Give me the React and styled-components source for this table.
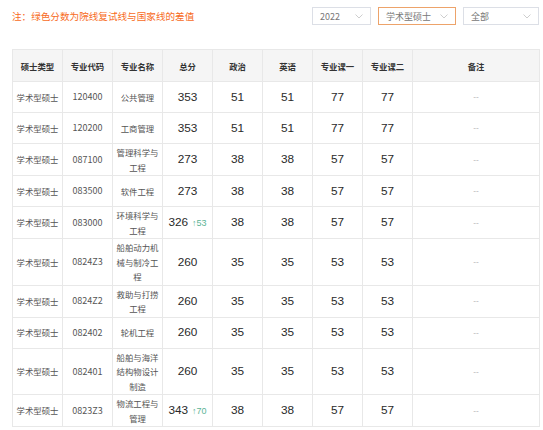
import React from "react";
import styled, { createGlobalStyle } from "styled-components";

const GlobalStyle = createGlobalStyle`
  body {
    margin: 0;
    background: #fff;
    font-family: "Noto Sans CJK SC", "Microsoft YaHei", sans-serif;
  }
`;

const Page = styled.div`
  width: 543px;
  padding: 0 4px 0 12px;
  box-sizing: border-box;
`;

const TopBar = styled.div`
  display: flex;
  align-items: center;
  justify-content: space-between;
  height: 32px;
`;

const Note = styled.div`
  color: #f76b1c;
  font-size: 9.6px;
  margin-top: -1px;
`;

const Filters = styled.div`
  display: flex;
  gap: 7px;
`;

const Select = styled.div`
  display: flex;
  align-items: center;
  justify-content: space-between;
  box-sizing: border-box;
  width: ${({ w }) => w}px;
  height: 18px;
  padding: 0 7px;
  border: 1px solid ${({ active }) => (active ? "#eda36a" : "#dcdfe6")};
  color: #777;
  font-size: 9px;
  background: #fff;
`;

const Chevron = () => (
  <svg width="8" height="5" viewBox="0 0 8 5">
    <path d="M0.5 0.5 L4 4 L7.5 0.5" fill="none" stroke="#c8c8c8" strokeWidth="0.9" />
  </svg>
);

const Table = styled.table`
  margin-top: 17px;
  border-collapse: collapse;
  table-layout: fixed;
  width: 527px;
`;

const Th = styled.th`
  background: #f5f5f5;
  border: 1px solid #e8e8e8;
  height: 31px;
  padding: 0;
  font-size: 8.4px;
  font-weight: bold;
  color: #333;
  text-align: center;
`;

const Td = styled.td`
  border: 1px solid #e8e8e8;
  height: 28px;
  padding: 1px 3px;
  text-align: center;
  font-size: 8.4px;
  line-height: 14.5px;
  color: #555;
`;

const Code = styled.span`
  font-size: 9px;
`;

const Score = styled.span`
  font-family: "Liberation Sans", Arial, sans-serif;
  font-size: 11.8px;
  font-weight: 400;
  line-height: 1;
  color: #2a2a2a;
`;

const Diff = styled.span`
  font-family: "Liberation Sans", Arial, sans-serif;
  font-size: 9px;
  line-height: 1;
  color: #5bb396;
  margin-left: 4px;
`;

const Dash = styled.span`
  font-size: 8px;
  color: #aaa;
`;

const rows = [
  ["120400", "公共管理", 353, null, 51, 51, 77, 77],
  ["120200", "工商管理", 353, null, 51, 51, 77, 77],
  ["087100", "管理科学与工程", 273, null, 38, 38, 57, 57],
  ["083500", "软件工程", 273, null, 38, 38, 57, 57],
  ["083000", "环境科学与工程", 326, 53, 38, 38, 57, 57],
  ["0824Z3", "船舶动力机械与制冷工程", 260, null, 35, 35, 53, 53],
  ["0824Z2", "救助与打捞工程", 260, null, 35, 35, 53, 53],
  ["082402", "轮机工程", 260, null, 35, 35, 53, 53],
  ["082401", "船舶与海洋结构物设计制造", 260, null, 35, 35, 53, 53],
  ["0823Z3", "物流工程与管理", 343, 70, 38, 38, 57, 57],
];

const heads = ["硕士类型", "专业代码", "专业名称", "总分", "政治", "英语", "专业课一", "专业课二", "备注"];

export default function App() {
  return (
    <Page>
      <GlobalStyle />
      <TopBar>
        <Note>注：绿色分数为院线复试线与国家线的差值</Note>
        <Filters>
          <Select w={59}>2022<Chevron /></Select>
          <Select w={78} active>学术型硕士<Chevron /></Select>
          <Select w={76}>全部<Chevron /></Select>
        </Filters>
      </TopBar>
      <Table>
        <colgroup>
          {heads.map((h, i) => (
            <col key={h} style={{ width: i < 8 ? 50 : 127 }} />
          ))}
        </colgroup>
        <thead>
          <tr>
            {heads.map((h) => (
              <Th key={h}>{h}</Th>
            ))}
          </tr>
        </thead>
        <tbody>
          {rows.map((r) => (
            <tr key={r[0]}>
              <Td>学术型硕士</Td>
              <Td><Code>{r[0]}</Code></Td>
              <Td>{r[1]}</Td>
              <Td>
                <Score>{r[2]}</Score>
                {r[3] && <Diff>↑{r[3]}</Diff>}
              </Td>
              <Td><Score>{r[4]}</Score></Td>
              <Td><Score>{r[5]}</Score></Td>
              <Td><Score>{r[6]}</Score></Td>
              <Td><Score>{r[7]}</Score></Td>
              <Td><Dash>--</Dash></Td>
            </tr>
          ))}
        </tbody>
      </Table>
    </Page>
  );
}
